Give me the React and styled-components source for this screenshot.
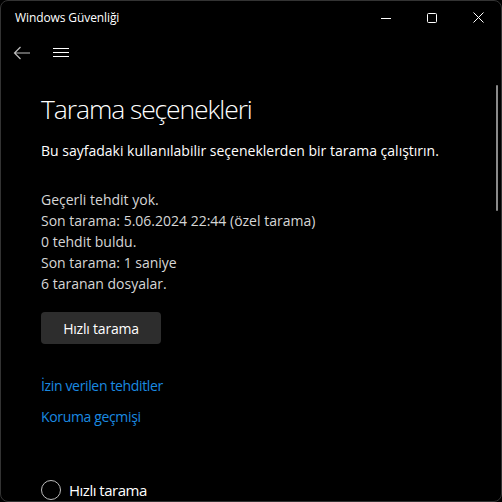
import styled, { createGlobalStyle } from "styled-components";

const GlobalStyle = createGlobalStyle`
  html, body {
    margin: 0;
    padding: 0;
    background: #000;
  }
  * {
    box-sizing: border-box;
  }
`;

const stats = [
  "Geçerli tehdit yok.",
  "Son tarama: 5.06.2024 22:44 (özel tarama)",
  "0 tehdit buldu.",
  "Son tarama: 1 saniye",
  "6 taranan dosyalar.",
];

const App = () => {
  return (
    <>
      <GlobalStyle />
      <Window>
        <TitleBar>
          <AppTitle>Windows Güvenliği</AppTitle>
          <Controls>
            <ControlButton aria-label="Simge durumuna küçült">
              <svg width="10" height="10" viewBox="0 0 10 10">
                <path d="M0 5.5h10" stroke="#fff" strokeWidth="1" />
              </svg>
            </ControlButton>
            <ControlButton aria-label="Ekranı kapla">
              <svg width="10" height="10" viewBox="0 0 10 10">
                <rect x="0.5" y="0.5" width="9" height="9" rx="1" fill="none" stroke="#fff" strokeWidth="1" />
              </svg>
            </ControlButton>
            <ControlButton aria-label="Kapat">
              <svg width="11" height="11" viewBox="0 0 11 11">
                <path d="M0.5 0.5l10 10M10.5 0.5l-10 10" stroke="#fff" strokeWidth="1" />
              </svg>
            </ControlButton>
          </Controls>
        </TitleBar>

        <NavRow>
          <IconButton aria-label="Geri">
            <svg width="18" height="14" viewBox="0 0 18 14">
              <path d="M17 7H1.5M7.5 1L1.5 7l6 6" fill="none" stroke="#bdbdbd" strokeWidth="1.2" />
            </svg>
          </IconButton>
          <IconButton aria-label="Menü">
            <svg width="16" height="10" viewBox="0 0 16 10">
              <path d="M0 0.5h16M0 4.5h16M0 8.5h16" stroke="#fff" strokeWidth="1" />
            </svg>
          </IconButton>
        </NavRow>

        <Content>
          <Heading>Tarama seçenekleri</Heading>
          <Subtitle>Bu sayfadaki kullanılabilir seçeneklerden bir tarama çalıştırın.</Subtitle>

          <StatList>
            {stats.map((s) => (
              <Stat key={s}>{s}</Stat>
            ))}
          </StatList>

          <ScanButton type="button">Hızlı tarama</ScanButton>

          <LinkList>
            <TextLink href="#">İzin verilen tehditler</TextLink>
            <TextLink href="#">Koruma geçmişi</TextLink>
          </LinkList>

          <RadioRow>
            <Radio />
            <RadioLabel>Hızlı tarama</RadioLabel>
          </RadioRow>
        </Content>

        <ScrollThumb />
      </Window>
    </>
  );
};
export default App;

const Window = styled.div`
  position: relative;
  width: 502px;
  height: 502px;
  background: #000;
  border: 1px solid #333;
  border-radius: 8px;
  overflow: hidden;
  font-family: "Open Sans", "Noto Sans", sans-serif;
  color: #fff;
`;

const TitleBar = styled.div`
  height: 33px;
  display: flex;
  align-items: center;
  justify-content: space-between;
  padding-left: 14px;
`;

const AppTitle = styled.span`
  font-size: 12px;
  color: #fff;
  letter-spacing: -0.1px;
`;

const Controls = styled.div`
  display: flex;
  height: 100%;
`;

const ControlButton = styled.button`
  width: 46px;
  height: 100%;
  border: none;
  background: transparent;
  display: flex;
  align-items: center;
  justify-content: center;
  padding: 0;
`;

const NavRow = styled.div`
  height: 38px;
  display: flex;
  align-items: center;
  gap: 22px;
  padding-left: 12px;
`;

const IconButton = styled.button`
  border: none;
  background: transparent;
  padding: 0;
  display: flex;
  align-items: center;
`;

const Content = styled.div`
  padding: 19px 0 0 40px;
  display: flex;
  flex-direction: column;
  align-items: flex-start;
`;

const Heading = styled.h1`
  margin: 0;
  font-size: 26.5px;
  font-weight: 300;
  line-height: 36px;
  letter-spacing: -1.1px;
`;

const Subtitle = styled.p`
  margin: 14px 0 0;
  font-size: 14px;
  line-height: 20px;
  color: #fff;
  letter-spacing: 0;
`;

const StatList = styled.div`
  margin-top: 28px;
  display: flex;
  flex-direction: column;
`;

const Stat = styled.div`
  font-size: 14px;
  line-height: 21px;
  color: #d6d6d6;
  letter-spacing: 0;
`;

const ScanButton = styled.button`
  margin-top: 18px;
  width: 120px;
  height: 32px;
  border: none;
  border-radius: 4px;
  background: #2d2d2d;
  color: #fff;
  font-family: inherit;
  font-size: 14px;
  letter-spacing: -0.2px;
`;

const LinkList = styled.div`
  margin-top: 32px;
  display: flex;
  flex-direction: column;
  gap: 11px;
`;

const TextLink = styled.a`
  font-size: 14px;
  line-height: 20px;
  color: #1a8ae0;
  text-decoration: none;
  letter-spacing: -0.35px;
`;

const RadioRow = styled.div`
  margin-top: 53px;
  display: flex;
  align-items: center;
  gap: 8px;
`;

const Radio = styled.span`
  width: 20px;
  height: 20px;
  border-radius: 50%;
  border: 1px solid #bdbdbd;
`;

const RadioLabel = styled.span`
  font-size: 15px;
  color: #fff;
  letter-spacing: -0.5px;
`;

const ScrollThumb = styled.div`
  position: absolute;
  right: 3px;
  top: 84px;
  width: 2px;
  height: 126px;
  border-radius: 1px;
  background: #8a8a8a;
`;
